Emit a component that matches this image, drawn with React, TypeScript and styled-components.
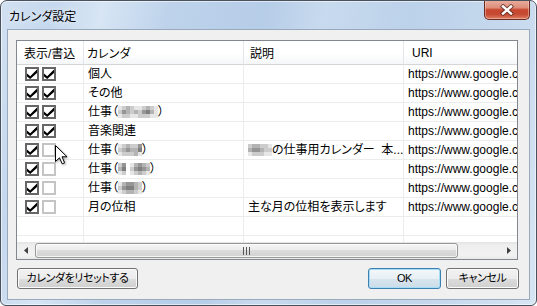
import React from "react";
import styled, { createGlobalStyle } from "styled-components";

const Global = createGlobalStyle`
  html, body { margin: 0; padding: 0; background: #ffffff; }
  body {
    width: 537px; height: 306px; overflow: hidden;
    font-family: "Liberation Sans", "Noto Sans CJK JP", sans-serif;
    font-size: 12px;
    font-feature-settings: "palt";
    color: #000;
  }
`;

const Window = styled.div`
  position: relative;
  box-sizing: border-box;
  width: 537px;
  height: 306px;
  border: 1px solid #4a525e;
  border-radius: 7px 7px 6px 6px;
  background: linear-gradient(103deg, #d2e1f2 0%, #c5d8ee 9%, #d7e5f4 17%, #bed3eb 28%, #b6cde8 44%, #c8daee 54%, #bcd2ea 68%, #c5d8ed 84%, #d8e5f3 100%);
  box-shadow: inset 0 0 0 1px rgba(255, 255, 255, 0.55);
  display: flex;
  flex-direction: column;
  overflow: hidden;
`;

const TitleBar = styled.div`
  height: 28px;
  flex: none;
  display: flex;
  align-items: center;
  padding-left: 8px;
`;

const Title = styled.div`
  font-family: "Noto Sans CJK JP", sans-serif;
  font-size: 12px;
  color: #000;
  text-shadow: 0 0 6px rgba(255, 255, 255, 0.9);
  flex: 1;
  margin-top: 1px;
`;

const CloseButton = styled.div`
  align-self: flex-start;
  box-sizing: border-box;
  width: 46px;
  height: 20px;
  margin-top: -1px;
  margin-right: 6px;
  border: 1px solid #6b2b22;
  border-top: none;
  border-radius: 0 0 5px 5px;
  background: linear-gradient(#eab0a2 0%, #de8e7a 40%, #c9462f 52%, #c64a33 75%, #df7d62 100%);
  box-shadow: inset 0 0 0 1px rgba(255, 220, 210, 0.45);
  display: flex;
  align-items: center;
  justify-content: center;
`;

const Client = styled.div`
  box-sizing: border-box;
  flex: 1;
  margin: 0 6px 5px 6px;
  border: 1px solid #98a9bc;
  background: #f0f0f0;
  padding: 10px 0 0 8px;
  display: flex;
  flex-direction: column;
`;

const ListView = styled.div`
  box-sizing: border-box;
  width: 502px;
  height: 220px;
  flex: none;
  border: 1px solid #828790;
  background: #ffffff;
  display: flex;
  flex-direction: column;
  overflow: hidden;
`;

const Viewport = styled.div`
  flex: 1;
  min-height: 0;
  overflow: hidden;
`;

const Grid = styled.div`
  display: grid;
  grid-template-columns: 67px 160px 160px 250px;
  grid-template-rows: 24px;
  grid-auto-rows: 19px;
  width: 637px;
`;

const HeadCell = styled.div<{ $pad: number }>`
  box-sizing: border-box;
  display: flex;
  align-items: center;
  padding-left: ${(p) => p.$pad}px;
  border-right: 1px solid #e3e6ea;
  border-bottom: 1px solid #d5d5d5;
  background: linear-gradient(#ffffff 0%, #ffffff 55%, #f5f6f8 100%);
  white-space: nowrap;
  overflow: hidden;
`;

const Cell = styled.div`
  box-sizing: border-box;
  display: flex;
  align-items: center;
  padding-left: 4px;
  border-right: 1px solid #ececec;
  border-bottom: 1px solid #ececec;
  white-space: pre;
  overflow: hidden;
  line-height: 18px;
`;

const CheckCell = styled(Cell)`
  padding-left: 8px;
  gap: 3px;
`;

const Box = styled.div<{ $checked: boolean }>`
  box-sizing: border-box;
  width: 14px;
  height: 14px;
  border: 2px solid ${(p) => (p.$checked ? "#676767" : "#c4c4c4")};
  background: #ffffff;
  display: flex;
  align-items: center;
  justify-content: center;
`;

const MosaicGrid = styled.span<{ $cols: number }>`
  display: inline-grid;
  grid-template-columns: repeat(${(p) => p.$cols}, 4px);
  grid-auto-rows: 4px;
  vertical-align: middle;
`;

const Pixel = styled.span<{ $c: string }>`
  background: ${(p) => p.$c};
`;

const HScroll = styled.div`
  height: 17px;
  flex: none;
  display: flex;
  background: linear-gradient(#e3e3e3 0px, #eeeeee 3px, #f2f2f2 13px, #e8e8e8 17px);
`;

const ScrollArrow = styled.div`
  width: 17px;
  height: 17px;
  flex: none;
  display: flex;
  align-items: center;
  justify-content: center;
`;

const Track = styled.div`
  flex: 1;
  display: flex;
  align-items: center;
  padding-left: 1px;
`;

const Thumb = styled.div`
  box-sizing: border-box;
  width: 423px;
  height: 15px;
  border: 1px solid #979797;
  border-radius: 3px;
  background: linear-gradient(#f5f5f5 0%, #ececec 45%, #dcdcdc 50%, #d1d1d1 100%);
  box-shadow: inset 0 0 0 1px rgba(255, 255, 255, 0.75);
  display: flex;
  align-items: center;
  justify-content: center;
`;

const ButtonRow = styled.div`
  width: 503px;
  box-sizing: border-box;
  padding-left: 1px;
  margin-top: 8px;
  display: flex;
  align-items: center;
  gap: 5px;
`;

const Spacer = styled.div`
  flex: 1;
`;

const Button = styled.button<{ $default?: boolean; $w: number }>`
  box-sizing: border-box;
  width: ${(p) => p.$w}px;
  height: 21px;
  padding: 0;
  margin: 0;
  font-family: "Liberation Sans", "Noto Sans CJK JP", sans-serif;
  font-size: 11px;
  letter-spacing: -0.4px;
  font-feature-settings: "palt";
  line-height: 19px;
  color: #000;
  border: 1px solid ${(p) => (p.$default ? "#3c7fb1" : "#707070")};
  border-radius: 3px;
  background: ${(p) =>
    p.$default
      ? "linear-gradient(#f2f7fa 0%, #e8f0f5 50%, #d8e5ee 50%, #cbdce8 100%)"
      : "linear-gradient(#f2f2f2 0%, #ebebeb 50%, #dddddd 50%, #cfcfcf 100%)"};
  box-shadow: inset 0 0 0 1px ${(p) => (p.$default ? "#a6dcf5" : "#fbfbfb")};
`;

const Cursor = styled.svg`
  position: absolute;
  left: 54px;
  top: 144px;
  filter: drop-shadow(1px 1px 1px rgba(0, 0, 0, 0.35));
`;

const SHADES: Record<string, string> = {
  a: "#e6e6e6",
  b: "#cccccc",
  c: "#b3b3b3",
  d: "#959595",
  e: "#7f7f7f",
  ".": "transparent",
};

type Part = string | { m: string[] };

const Mosaic = ({ rows }: { rows: string[] }) => (
  <MosaicGrid $cols={rows[0].length}>
    {rows.flatMap((r, i) => r.split("").map((ch, j) => <Pixel key={`${i}-${j}`} $c={SHADES[ch]} />))}
  </MosaicGrid>
);

const Parts = ({ parts }: { parts: Part[] }) => (
  <>
    {parts.map((p, i) => (typeof p === "string" ? <span key={i}>{p}</span> : <Mosaic key={i} rows={p.m} />))}
  </>
);

const M1 = ["abcbaabcba", "bdcbcbdeca", "abbaabbbaa"];
const M2 = ["abcbbd", "bcdcce", "abbbca"];
const M3 = ["bd.acdcb", "ce.bdedc", "ab.abcba"];
const M4 = ["acddcb", "bdeecb", "abccba"];
const M5 = ["bccbba", "cddcbb", "abbbaa"];

type Row = { name: Part[]; show: boolean; write: boolean; desc?: Part[] };

const URI = "https://www.google.com/calendar/feeds/";

const ROWS: Row[] = [
  { name: ["個人"], show: true, write: true },
  { name: ["その他"], show: true, write: true },
  { name: ["仕事（", { m: M1 }, "）"], show: true, write: true },
  { name: ["音楽関連"], show: true, write: true },
  { name: ["仕事（", { m: M2 }, "）"], show: true, write: false, desc: [{ m: M5 }, "の仕事用カレンダー  本..."] },
  { name: ["仕事（", { m: M3 }, "）"], show: true, write: false },
  { name: ["仕事（", { m: M4 }, "）"], show: true, write: false },
  { name: ["月の位相"], show: true, write: false, desc: ["主な月の位相を表示します"] },
];

const Check = ({ checked }: { checked: boolean }) => (
  <Box $checked={checked}>
    {checked && (
      <svg width="10" height="10" viewBox="0 0 10 10">
        <polygon points="0,4.6 3.2,7.3 10,0.5 10,4 3.2,10 0,7.4" fill="#000" />
      </svg>
    )}
  </Box>
);

export default function App() {
  return (
    <>
      <Global />
      <Window>
        <TitleBar>
          <Title>カレンダ設定</Title>
          <CloseButton>
            <svg width="16" height="12" viewBox="0 0 16 12">
              <g strokeLinecap="square">
                <line x1="4" y1="2.5" x2="12" y2="9.5" stroke="#5a2a24" strokeWidth="4.4" strokeOpacity="0.75" />
                <line x1="12" y1="2.5" x2="4" y2="9.5" stroke="#5a2a24" strokeWidth="4.4" strokeOpacity="0.75" />
                <line x1="4" y1="2.5" x2="12" y2="9.5" stroke="#ffffff" strokeWidth="2.4" />
                <line x1="12" y1="2.5" x2="4" y2="9.5" stroke="#ffffff" strokeWidth="2.4" />
              </g>
            </svg>
          </CloseButton>
        </TitleBar>
        <Client>
          <ListView>
            <Viewport>
              <Grid>
                <HeadCell $pad={7}>表示/書込</HeadCell>
                <HeadCell $pad={3}>カレンダ</HeadCell>
                <HeadCell $pad={6}>説明</HeadCell>
                <HeadCell $pad={8}>URI</HeadCell>
                {ROWS.map((r, i) => (
                  <React.Fragment key={i}>
                    <CheckCell>
                      <Check checked={r.show} />
                      <Check checked={r.write} />
                    </CheckCell>
                    <Cell>
                      <Parts parts={r.name} />
                    </Cell>
                    <Cell>{r.desc && <Parts parts={r.desc} />}</Cell>
                    <Cell>{URI}</Cell>
                  </React.Fragment>
                ))}
                {[0, 1].map((i) => (
                  <React.Fragment key={`e${i}`}>
                    <Cell />
                    <Cell />
                    <Cell />
                    <Cell />
                  </React.Fragment>
                ))}
              </Grid>
            </Viewport>
            <HScroll>
              <ScrollArrow>
                <svg width="4" height="7" viewBox="0 0 4 7">
                  <polygon points="4,0 0,3.5 4,7" fill="#404040" />
                </svg>
              </ScrollArrow>
              <Track>
                <Thumb>
                  <svg width="7" height="8" viewBox="0 0 7 8">
                    <rect x="0" y="0" width="1" height="8" fill="#555" />
                    <rect x="3" y="0" width="1" height="8" fill="#555" />
                    <rect x="6" y="0" width="1" height="8" fill="#555" />
                  </svg>
                </Thumb>
              </Track>
              <ScrollArrow>
                <svg width="4" height="7" viewBox="0 0 4 7">
                  <polygon points="0,0 4,3.5 0,7" fill="#404040" />
                </svg>
              </ScrollArrow>
            </HScroll>
          </ListView>
          <ButtonRow>
            <Button $w={121}>カレンダをリセットする</Button>
            <Spacer />
            <Button $w={73} $default>
              OK
            </Button>
            <Button $w={73}>キャンセル</Button>
          </ButtonRow>
        </Client>
        <Cursor width="13" height="20" viewBox="0 0 13 20">
          <path d="M0.5,0.5 L0.5,16.5 L4.5,12.8 L7.2,18.8 L9.6,17.8 L7,11.8 L12,11.8 Z" fill="#ffffff" stroke="#000000" strokeWidth="1" strokeLinejoin="miter" />
        </Cursor>
      </Window>
    </>
  );
}
